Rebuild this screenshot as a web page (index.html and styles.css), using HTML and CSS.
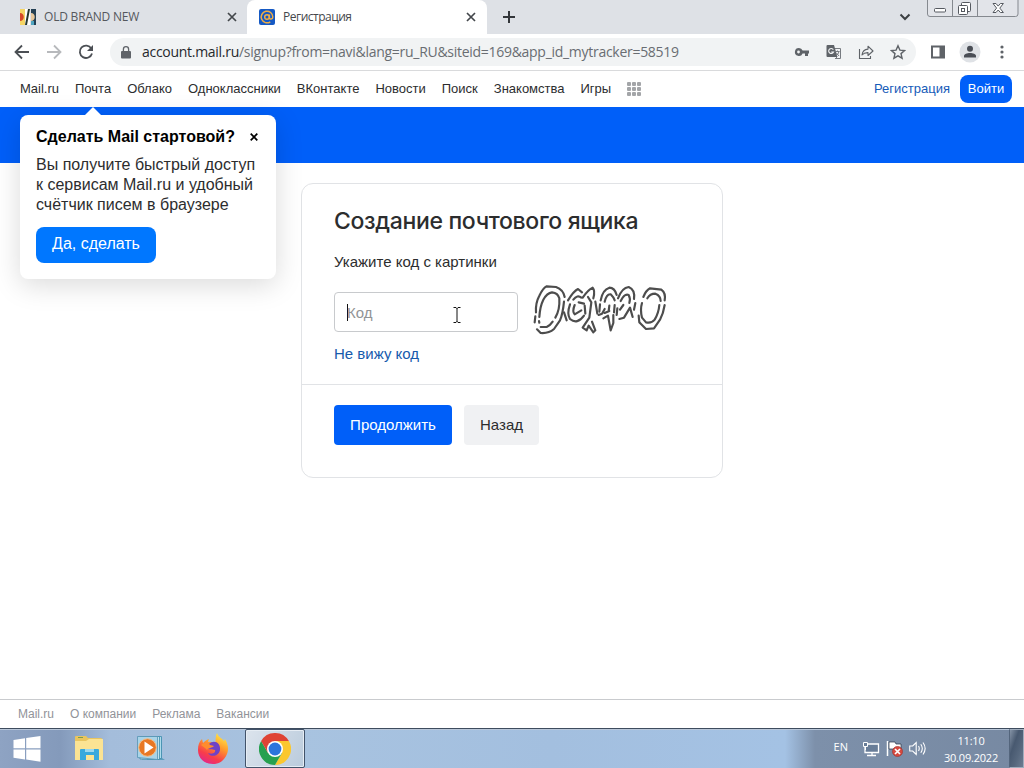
FILE: index.html
```html
<!DOCTYPE html>
<html lang="ru">
<head>
<meta charset="utf-8">
<title>Регистрация</title>
<link rel="stylesheet" href="styles.css">
</head>
<body>
<div class="screen">
  <header class="tabstrip">
    <div class="tab">
      <svg class="favicon" viewBox="0 0 16 16"><path fill="#f5d565" d="M0 0h5v16H0z"/><path fill="#d7492a" d="M0 4c5 0 5 8 0 8z"/><path fill="#fff" d="M5 0h5v16H5z"/><path fill="#25372f" d="M8 0h2L7 16H5z"/><path fill="#233f53" d="M11 0h5v16h-5z"/><path fill="#e5c79d" d="M11 4c5 0 5 8 0 8z"/><path fill="#50a5c1" d="M11 12h3v4h-3z"/></svg>
      <span class="tab-title tab-title-old">OLD BRAND NEW</span>
      <svg class="close" viewBox="0 0 10 10"><path d="M1 1l8 8M9 1L1 9"/></svg>
    </div>
    <div class="tab tab-active">
      <svg class="favicon" viewBox="0 0 16 16"><rect width="16" height="16" rx="2" fill="#1559c4"/><g fill="none" stroke="#f0ae45" stroke-width="1.500"><circle cx="8" cy="8" r="2.300"/><path d="M10.400 5.600v3.200c0 2 3.400 1.600 3.400-.8A5.800 5.800 0 1 0 11.300 12.800"/></g></svg>
      <span class="tab-title">Регистрация</span>
      <svg class="close" viewBox="0 0 10 10"><path d="M1 1l8 8M9 1L1 9"/></svg>
    </div>
    <svg class="plus" viewBox="0 0 14 14"><path d="M7 1v12M1 7h12"/></svg>
    <svg class="chevron" viewBox="0 0 12 8"><path d="M1.500 1.500L6 6l4.500-4.500"/></svg>
    <svg class="controls" viewBox="0 0 94 18"><path fill="#e2e4e9" stroke="#85898f" d="M1.500-1v15q0 2.500 2.500 2.500h85.500q2.500 0 2.500-2.500V-1M26.500 0v16.500M51.500 0v16.500"/><g fill="#fff" stroke="#555960"><rect x="8.500" y="8.500" width="11" height="3.500" rx="1"/><rect x="35.500" y="2.500" width="9" height="9" rx="1"/><rect x="32.500" y="5.500" width="9" height="9" rx="1"/><rect x="35.500" y="8.500" width="3" height="3"/><path d="M67 3.500h3l2.200 2.600 2.200-2.600h3l-3.600 4.600 3.600 4.400h-3l-2.200-2.500-2.200 2.500h-3l3.600-4.400z"/></g></svg>
  </header>

  <div class="toolbar">
    <svg class="navicon" viewBox="0 0 16 16"><path d="M15 8H2M8 1.500L1.500 8 8 14.500"/></svg>
    <svg class="navicon forward" viewBox="0 0 16 16"><path d="M1 8h13M8 1.500L14.500 8 8 14.500"/></svg>
    <svg class="navicon" viewBox="0 0 16 16"><path d="M13.300 4.500A6.200 6.200 0 1 0 14 9.500"/><path class="solid" d="M15 1v6H9z"/></svg>
    <div class="address">
      <svg class="lock" viewBox="0 0 10 13"><path fill="#5f6368" d="M1 5h8q1 0 1 1v5.500q0 1-1 1H1q-1 0-1-1V6q0-1 1-1z"/><path fill="none" stroke="#5f6368" stroke-width="1.300" d="M2.400 5V3.300a2.600 2.600 0 0 1 5.200 0V5"/></svg>
      <span class="url"><b>account.mail.ru</b>/signup?from=navi&amp;lang=ru_RU&amp;siteid=169&amp;app_id_mytracker=58519</span>
      <div class="actions">
        <svg viewBox="0 0 16 16"><path fill="#5f6368" fill-rule="evenodd" d="M5 4a4 4 0 1 0 3.600 5.500H11V12h3V9.500h1v-3H8.600A4 4 0 0 0 5 4zm-.5 2.600a1.400 1.400 0 1 1 0 2.800 1.400 1.400 0 0 1 0-2.800z"/></svg>
        <svg viewBox="0 0 16 16"><path fill="#f3f4f6" stroke="#777b80" d="M7 4.500h7.500v10H9"/><path fill="#5f6368" d="M1.500 1H8l3.500 12h-10q-1 0-1-1V2q0-1 1-1z"/><path fill="none" stroke="#f1f3f4" stroke-width="1.200" d="M7.300 5.600A2.500 2.500 0 1 0 7.500 8H5.200"/><path fill="none" stroke="#777b80" d="M9.500 7.500h4M11.500 6.500v1M13 7.500q-.5 2.500-2.500 4M10.500 9l2.500 3M9 15l2-2"/></svg>
        <svg viewBox="0 0 16 16"><g fill="none" stroke="#5f6368" stroke-width="1.100"><path d="M1.500 5v9.500h11V12"/><path stroke-linejoin="round" d="M4 11c.5-4 2.600-5.800 6-5.900V2.200L15 7l-5 4.500V8.600C7.500 8.500 5.500 9.200 4 11z"/></g></svg>
        <svg viewBox="0 0 16 16"><path fill="none" stroke="#5f6368" stroke-width="1.400" d="M8 1.800l1.900 4.300 4.700.4-3.600 3.100 1.100 4.600L8 11.800l-4.100 2.400L5 9.600 1.400 6.500l4.700-.4z"/></svg>
      </div>
    </div>
    <svg class="panel" viewBox="0 0 16 16"><path fill="#5f6368" fill-rule="evenodd" d="M1 1.500h14v13H1zM3 3.500v9h6.500v-9z"/></svg>
    <svg class="avatar" viewBox="0 0 22 22"><circle cx="11" cy="11" r="10.500" fill="#dfe2e6"/><circle cx="11" cy="7.800" r="3" fill="#4a4e56"/><path fill="#4a4e56" d="M5 16.500v-1.600c0-4 12-4 12 0v1.600z"/></svg>
    <svg class="dots" viewBox="0 0 4 16"><g fill="#5f6368"><circle cx="2" cy="3" r="1.600"/><circle cx="2" cy="8" r="1.600"/><circle cx="2" cy="13" r="1.600"/></g></svg>
  </div>

  <nav class="portal">
    <a>Mail.ru</a><a class="anchor">Почта
      <aside class="popup">
        <div class="popup-head"><strong>Сделать Mail стартовой?</strong><svg viewBox="0 0 8 8"><path d="M.7.700l6.600 6.600M7.300.7L.7 7.300"/></svg></div>
        <p>Вы получите быстрый доступ<br>к сервисам Mail.ru и удобный<br>счётчик писем в браузере</p>
        <button>Да, сделать</button>
      </aside></a><a>Облако</a><a>Одноклассники</a><a>ВКонтакте</a><a>Новости</a><a>Поиск</a><a>Знакомства</a><a>Игры</a>
    <svg class="apps" viewBox="0 0 14 14"><g fill="#a3a5a8"><rect width="4" height="4" rx="1"/><rect x="5" width="4" height="4" rx="1"/><rect x="10" width="4" height="4" rx="1"/><rect y="5" width="4" height="4" rx="1"/><rect x="5" y="5" width="4" height="4" rx="1"/><rect x="10" y="5" width="4" height="4" rx="1"/><rect y="10" width="4" height="4" rx="1"/><rect x="5" y="10" width="4" height="4" rx="1"/><rect x="10" y="10" width="4" height="4" rx="1"/></g></svg>
    <a class="register">Регистрация</a>
    <button class="login">Войти</button>
  </nav>
  <div class="banner"></div>

  <main>
    <section class="card">
      <div class="card-body">
        <h1>Создание почтового ящика</h1>
        <p class="hint">Укажите код с картинки</p>
        <div class="code-row">
          <div class="field"><i class="caret"></i><span>Код</span>
            <svg class="ibeam" viewBox="0 0 8 16"><path d="M.500.500H3l1 1 1-1h2.500M4 1v14M.500 15.500H3l1-1 1 1h2.500"/></svg>
          </div>
          <svg class="captcha" viewBox="-6 -9 432 180"><g fill="none" stroke="#4d4d4d" stroke-width="6.500" stroke-linejoin="round" stroke-linecap="round">
            <path d="M12 88Q10 60 22 38Q34 14 44 10L72 12Q94 20 98 42M96 56Q92 95 84 112L66 138Q50 152 26 150L15 139M10 100L8 118"/>
            <path d="M22 102Q24 70 34 50Q45 30 60 28Q78 30 82 46Q84 80 70 104M62 116Q54 128 44 132L26 132M21 114L22 119"/>
            <path d="M108 52Q125 24 138 18L150 28M124 50Q136 34 148 44M114 64Q104 92 114 108Q136 126 156 98M128 66Q120 86 128 94L148 82M96 88L104 112M140 58L156 62"/>
            <path d="M152 44Q168 20 182 14Q190 22 184 46M168 42L178 58L172 104L152 134L164 142L170 128L184 148L190 142L180 116M190 56L196 92M158 68L160 92"/>
            <path transform="translate(198)" d="M8 52Q14 20 34 14Q50 14 56 36M20 56Q26 32 38 34Q48 44 50 52M6 64L4 86M2 96L12 92L20 78M20 90L34 84M34 68L32 84M16 106L30 98L38 142L46 120L46 96M50 66L48 88"/>
            <path transform="translate(198)" d="M60 46Q72 14 92 12Q112 20 108 48M68 54Q80 30 92 36Q98 46 94 60M76 66L66 80M58 76L56 96M64 108L78 104L96 74L104 102M112 60L108 80M122 98L124 118"/>
            <path transform="translate(198)" d="M136 42Q144 22 156 16L190 20Q204 30 200 52M200 66Q196 92 186 110L168 136L144 138L126 120"/>
            <path transform="translate(198)" d="M148 46Q156 32 172 32Q188 38 188 54M184 66Q182 90 170 110Q160 122 144 118L132 104Q126 80 132 60"/>
          </g></svg>
        </div>
        <a class="cant-see">Не вижу код</a>
      </div>
      <div class="card-actions"><button class="primary">Продолжить</button><button class="secondary">Назад</button></div>
    </section>
  </main>

  <footer><a>Mail.ru</a><a>О компании</a><a>Реклама</a><a>Вакансии</a></footer>

  <div class="taskbar">
    <svg class="start" viewBox="0 0 28 26"><path fill="#fff" d="M.500 4L12 2.300v10H.500zM13.200 2.100L27.500 0v12.300H13.200zM.500 13.400H12v10.100L.500 21.800zM13.200 13.400h14.300v12.300l-14.300-2.100z"/></svg>
    <svg class="explorer" viewBox="0 0 28 25"><path fill="#e9c55f" d="M0 1q0-1 1-1h10l2 2h13q1 0 1 1v20H0z"/><path fill="#fbe393" d="M0 5h11l3-2h14v21H0z"/><path fill="#7b9c50" d="M3 1h5v1H3z"/><path fill="#38a9dc" d="M5 14q0-1 1-1h17q1 0 1 1v10h-5v-5h-8v5H5z"/><path fill="#9bd8ee" d="M10 13h9v3h-9z"/></svg>
    <svg class="player" viewBox="0 0 28 27"><path fill="#5d9dbd" d="M7 2h18v21l3 2H10z"/><path fill="#aedceb" stroke="#3d8cac" stroke-width=".8" d="M5 1.500h19.500v22L5 24z"/><path fill="#bfe3ef" stroke="#3d8cac" stroke-width=".8" d="M3 1.500h19.500v23L3 24z"/><path fill="#a9d4e8" stroke="#5593b3" stroke-width=".8" d="M.500 1.500h20v23l-20-2z"/><circle cx="10.500" cy="12.500" r="8.800" fill="#e87824" stroke="#f3bd87"/><path fill="#fff" d="M7.500 6.500l9 6-9 6z"/></svg>
    <svg class="firefox" viewBox="0 0 32 32"><defs><linearGradient id="fx" x1=".8" y1="0" x2=".3" y2="1"><stop offset="0" stop-color="#fff04a"/><stop offset=".4" stop-color="#ff9a2b"/><stop offset=".75" stop-color="#f83d4a"/><stop offset="1" stop-color="#e3268a"/></linearGradient></defs><path fill="url(#fx)" d="M20 0c1 4 5 5 7 8l1-2c3 5 4 10 2 15-3 7-8 10-14 10C7 31 1 25 1 17c0-5 1-8 4-11l1 4c2-2 3-3 6-4l-1 3c4-1 6 1 7 3 1-3 0-8 2-12z"/><path fill="#6f42c5" d="M12 11c5-5 12-1 11 6-1 6-9 8-12 3 5 2 8-1 7-3-3-1-6 0-8-2l3-2z"/><path fill="#ff8c2e" d="M4 12c3-3 7-3 9 0l4 1c-2 2-6 2-7 4-1-2-4-3-6-5z"/></svg>
    <div class="task-active"><svg viewBox="0 0 32 32"><path fill="#df4334" d="M16 16L2.140 8A16 16 0 0 1 29.860 8z"/><path fill="#fbc72e" d="M16 8h13.860A16 16 0 0 1 16 32l6.930-12z"/><path fill="#27a04f" d="M22.930 20L16 32A16 16 0 0 1 2.140 8l6.930 12z"/><path fill="#df4334" d="M2.140 8h13.860v8L9.070 20z"/><circle cx="16" cy="16" r="8" fill="#fff"/><circle cx="16" cy="16" r="6.400" fill="#2c75dc"/></svg></div>
    <div class="tray">
      <span class="lang">EN</span>
      <svg class="network" viewBox="0 0 18 16"><path fill="#687d98" stroke="#fff" stroke-width="1.300" d="M3 3h13.500v8.500H3zM10 12v2M5 14.500h9"/><path fill="#687d98" stroke="#fff" d="M1.500 1.500h4v4h-4zM3.500 5.500V9"/></svg>
      <svg class="flag" viewBox="0 0 17 16"><path fill="none" stroke="#fff" stroke-width="1.500" d="M1.500 0v15"/><path fill="#fff" stroke="#283445" stroke-width=".7" d="M3 1h6l1 2h5v7H9L8 8H3z"/><circle cx="11.500" cy="10.500" r="5" fill="#d8493f" stroke="#a5332e" stroke-width=".7"/><path stroke="#fff" stroke-width="1.700" d="M9 8l5 5M14 8l-5 5"/></svg>
      <svg class="sound" viewBox="0 0 17 15"><g fill="none" stroke="#fff" stroke-width="1.100"><path d="M.700 5h3l3.500-3.500v12L3.700 10h-3zM9.500 5q1.500 2.500 0 5M11.800 3.200q3 4.300 0 8.600M14 1.500q4.300 6 0 12"/></g></svg>
      <div class="clock"><span>11:10</span><span>30.09.2022</span></div>
    </div>
    <div class="show-desktop"></div>
  </div>
</div>
</body>
</html>
```
FILE: styles.css
```css
* { box-sizing: border-box; }
body { margin: 0; overflow: hidden; }
svg { display: block; flex: none; }
button { border: 0; font: inherit; padding: 0 0 2px; }
p, h1 { margin: 0; }
.screen { width: 1024px; height: 768px; display: flex; flex-direction: column; background: #fff; font-family: "Liberation Sans", sans-serif; color: #2c2d2e; white-space: nowrap; }

.tabstrip { height: 34px; flex: none; display: flex; align-items: center; background: #dee1e6; font: 12px "Open Sans", sans-serif; }
.tab { width: 247px; height: 34px; display: flex; align-items: center; padding: 0 10px 0 20px; color: #55585d; }
.tab-active { width: 240px; padding: 0 11px 0 12px; background: #fff; border-radius: 8px 8px 0 0; color: #45484c; }
.favicon { width: 16px; height: 16px; }
.tab-title { flex: 1; margin: -1px 0 0 8px; letter-spacing: -.5px; }
.tab-title-old { letter-spacing: -.2px; }
.close { width: 10px; height: 10px; fill: none; stroke: #43474b; stroke-width: 1.7; }
.plus { width: 14px; height: 14px; margin-left: 15px; fill: none; stroke: #33363a; stroke-width: 2; }
.chevron { width: 12px; height: 8px; margin-left: auto; fill: none; stroke: #3c4043; stroke-width: 2; }
.controls { width: 94px; height: 18px; align-self: flex-start; margin: 0 4px 0 15px; }

.toolbar { height: 37px; flex: none; display: flex; align-items: center; padding: 0 20px 0 14px; border-bottom: 1px solid #d9dadc; }
.navicon { width: 16px; height: 16px; margin-right: 16px; fill: none; stroke: #4b4f54; stroke-width: 1.8; }
.forward { stroke: #b7b9bc; }
.solid { fill: #4b4f54; stroke: none; }
.address { width: 806px; height: 28px; border-radius: 14px; background: #f1f3f4; display: flex; align-items: center; padding: 0 10px 0 11px; }
.lock { width: 10px; height: 13px; }
.url { margin: -1px 0 0 11px; font: 14px "Open Sans", sans-serif; letter-spacing: -.285px; color: #696d72; }
.url b { font-weight: 400; color: #25282c; }
.actions { display: flex; gap: 16px; margin-left: auto; }
.actions svg { width: 16px; height: 16px; }
.panel { width: 16px; height: 16px; margin-left: 14px; }
.avatar { width: 22px; height: 22px; margin-left: 13px; }
.dots { width: 4px; height: 16px; margin-left: auto; }

.portal { height: 36px; flex: none; display: flex; align-items: center; gap: 16px; padding: 0 12px 0 20px; font-size: 13px; position: relative; }
.portal > a { margin-top: -2px; }
.anchor { position: relative; }
.apps { width: 14px; height: 14px; }
.portal > .register { margin-left: auto; color: #165bb8; }
.login { width: 52px; height: 28px; margin-left: -6px; border-radius: 8px; background: #005ff9; color: #fff; }
.banner { height: 56px; flex: none; background: #005ff9; }

.popup { position: absolute; z-index: 2; left: -55px; top: 34px; width: 256px; height: 164px; padding: 12px 16px 16px; border-radius: 8px; background: #fff; box-shadow: 0 6px 28px rgba(0,0,0,.15); font-size: 16px; line-height: 20px; color: #2c2d2e; }
.popup::before { content: ""; position: absolute; left: 65px; top: -8px; border: 8px solid transparent; border-top: 0; border-bottom-color: #fff; }
.popup-head { display: flex; align-items: center; justify-content: space-between; padding-right: 2px; color: #000; }
.popup-head svg { width: 8px; height: 8px; stroke: #000; stroke-width: 1.7; }
.popup p { margin: 8px 0 12px; }
.popup button { width: 120px; height: 36px; border-radius: 8px; background: #07f; color: #fff; }

main { flex: 1; display: flex; justify-content: center; align-items: flex-start; padding-top: 20px; }
.card { width: 422px; height: 295px; border: 1px solid #e1e3e6; border-radius: 12px; }
.card-body { height: 201px; padding: 21px 32px 0; border-bottom: 1px solid #e1e3e6; display: flex; flex-direction: column; align-items: flex-start; }
h1 { font: 500 23px/32px "Inter", sans-serif; letter-spacing: -.33px; }
.hint { margin-top: 15px; font-size: 15px; line-height: 20px; }
.code-row { display: flex; margin-top: 20px; }
.field { width: 184px; height: 40px; border: 1px solid #c8cacd; border-radius: 4px; position: relative; display: flex; align-items: center; padding-left: 12px; font-size: 15px; color: #929496; }
.caret { width: 1px; height: 17px; background: #111; margin-right: -1px; }
.ibeam { position: absolute; left: 118px; top: 14px; width: 8px; height: 16px; fill: none; stroke: #111; }
.captcha { width: 144px; height: 60px; margin: -12px 0 -8px 12px; }
.cant-see { margin-top: 12px; font-size: 15px; line-height: 20px; color: #165aac; }
.card-actions { display: flex; gap: 12px; padding: 20px 32px; font-size: 15px; }
.primary { width: 118px; height: 40px; border-radius: 4px; background: #005ff9; color: #fff; }
.secondary { width: 75px; height: 40px; border-radius: 4px; background: #f0f1f3; color: #2c2d2e; }

footer { height: 29px; flex: none; border-top: 1px solid #c9cbce; display: flex; gap: 16px; align-items: center; padding-left: 18px; font-size: 12px; color: #919399; }

.taskbar { height: 40px; flex: none; display: flex; align-items: center; border-top: 1px solid #3e4c5e; box-shadow: inset 0 1px #b9c7d9; background: linear-gradient(90deg, #8ea3c3 0, #849abb 60px, #a4bddb 110px, #a8c3e0 300px, #a3bfdf 550px, #a4c2e4 785px, #7d90aa 815px, #7789a2 100%); }
.start { width: 28px; height: 26px; margin-left: 13px; }
.explorer { width: 28px; height: 25px; margin-left: 34px; }
.player { width: 28px; height: 27px; margin-left: 34px; }
.firefox { width: 32px; height: 32px; margin-left: 32px; }
.task-active { width: 60px; height: 39px; margin-left: 16px; border: 1px solid #42536a; border-radius: 2px; background: linear-gradient(120deg, #dce4ed, #bacbdc); box-shadow: inset 0 0 0 1px #e6edf4; display: grid; place-items: center; }
.task-active svg { width: 32px; height: 32px; }
.tray { margin-left: auto; display: flex; align-items: center; color: #fff; font: 11px "Open Sans", sans-serif; }
.lang { margin: -5px 14px 0 0; }
.network { width: 18px; height: 16px; margin-right: 6px; }
.flag { width: 17px; height: 16px; margin-right: 6px; }
.sound { width: 17px; height: 15px; margin-right: 17px; }
.clock { width: 56px; display: flex; flex-direction: column; align-items: center; line-height: 17px; letter-spacing: -.2px; }
.show-desktop { width: 15px; height: 39px; margin-left: 10px; border: 1px solid #a0adbd; border-left-color: #53657c; background: linear-gradient(110deg, #8593a6, #485970 35%, #56677d 65%, #6c7c91); }
```
